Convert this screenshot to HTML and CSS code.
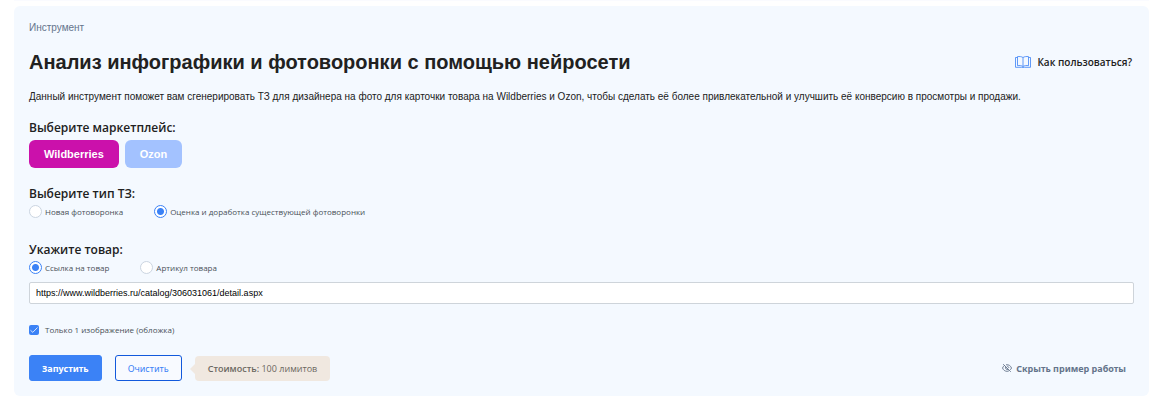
FILE: index.html
```html
<!DOCTYPE html>
<html lang="ru">
<head>
    <meta charset="UTF-8">
    <meta name="viewport" content="width=device-width, initial-scale=1.0">
    <title>Анализ инфографики и фотоворонки</title>
    <link rel="stylesheet" href="styles.css">
</head>
<body>
    <main class="card">
        <div class="category">Инструмент</div>
        <div class="header">
            <h1 class="title">Анализ инфографики и фотоворонки с помощью нейросети</h1>
            <a class="help" href="#">
                <svg width="16" height="12" viewBox="0 0 16 12" fill="none" stroke="#3b82f6" stroke-width=".8">
                    <path d="M8 1.500C6.500 .5 4.500 .4 2.500 .6V9.700C4.500 9.300 6.500 9.500 8 10.500C9.500 9.500 11.500 9.300 13.500 9.700V.6C11.500 .4 9.500 .5 8 1.500Z"/>
                    <path d="M8 1.500V10.500M2.500 1.500H.5V11.300H6.500L8 11.500L9.500 11.300H15.500V1.500H13.500"/>
                </svg>
                Как пользоваться?
            </a>
        </div>
        <p class="description">Данный инструмент поможет вам сгенерировать ТЗ для дизайнера на фото для карточки товара на Wildberries и Ozon, чтобы сделать её более привлекательной и улучшить её конверсию в просмотры и продажи.</p>

        <form class="form">
            <h2 class="label">Выберите маркетплейс:</h2>
            <div class="markets">
                <button class="market wildberries" type="button">Wildberries</button>
                <button class="market ozon" type="button">Ozon</button>
            </div>

            <h2 class="label">Выберите тип ТЗ:</h2>
            <div class="options">
                <label class="option"><input class="radio" type="radio" name="type">Новая фотоворонка</label>
                <label class="option"><input class="radio" type="radio" name="type" checked>Оценка и доработка существующей фотоворонки</label>
            </div>

            <h2 class="label">Укажите товар:</h2>
            <div class="options product">
                <label class="option"><input class="radio" type="radio" name="product" checked>Ссылка на товар</label>
                <label class="option"><input class="radio" type="radio" name="product">Артикул товара</label>
            </div>
            <input class="url" type="text" aria-label="Ссылка на товар" value="https://www.wildberries.ru/catalog/306031061/detail.aspx">

            <label class="option cover">
                <span class="check">
                    <input class="checkbox" type="checkbox" checked>
                    <svg class="tick" width="10" height="10" viewBox="0 0 10 10" fill="none" stroke="#fff" stroke-width=".8">
                        <path d="M1.500 5.300L3.800 7.300L8.500 2.500"/>
                    </svg>
                </span>
                Только 1 изображение (обложка)
            </label>

            <div class="actions">
                <button class="button run" type="button">Запустить</button>
                <button class="button clear" type="button">Очистить</button>
                <div class="cost"><span class="cost-name">Стоимость:</span> 100 лимитов</div>
                <button class="toggle" type="button">
                    <svg width="10" height="10" viewBox="0 0 10 10" fill="none" stroke="#64748b" stroke-width=".9">
                        <path d="M3 2.100C1.700 2.800 .9 3.900 .5 5C1.300 7.100 3 8.300 5 8.300C5.700 8.300 6.400 8.100 7 7.800M4 1.800C6.500 1.300 8.700 2.700 9.500 5C9.200 5.800 8.800 6.400 8.200 6.900M1.200 1.200L8.800 8.800M3.700 3.800C2.800 5.200 4.500 7.200 6.200 6.300M5 3.200C6 3.200 6.800 4 6.800 5"/>
                    </svg>
                    Скрыть пример работы
                </button>
            </div>
        </form>
    </main>
</body>
</html>
```
FILE: styles.css
```css
* {
    box-sizing: border-box;
}

html {
    background-color: #fff;
}

body {
    margin: 0 25px 8px 14px;
    padding-top: 5px;
    border-top: 1px solid #fafbff;
    color: #212121;
    font-family: "Open Sans", "Noto Sans", sans-serif;
}

.card {
    padding: 15px;
    border-radius: 6px;
    background-color: #f4f9ff;
}

.category {
    color: #64748b;
    font: 10px/14px "Liberation Sans", Arial, sans-serif;
}

.header {
    display: flex;
    justify-content: space-between;
    align-items: center;
    margin-top: 13px;
}

.title {
    margin: 0;
    font: bold 20px/28px "Liberation Sans", Arial, sans-serif;
}

.help {
    display: flex;
    align-items: center;
    gap: 6px;
    padding: 0 2px;
    color: #212121;
    font-size: 10px;
    font-weight: 600;
    line-height: 14px;
    text-decoration: none;
}

.description {
    margin: 14px 0 15px;
    font: 10px/14px "Liberation Sans", Arial, sans-serif;
}

.label {
    margin: 0;
    font-size: 12px;
    font-weight: 600;
    line-height: 18px;
}

.markets {
    display: flex;
    gap: 6px;
    margin: 3px 0 17px;
}

.market {
    height: 28px;
    padding: 0 15px;
    border: none;
    border-radius: 6px;
    color: #fff;
    font: bold 11px/26px "Liberation Sans", Arial, sans-serif;
    cursor: pointer;
}

.wildberries {
    background-color: #cb11ab;
}

.ozon {
    background-color: #a3c2ff;
}

.options {
    display: flex;
    gap: 31px;
    margin: 2px 0 23px;
}

.product {
    margin-bottom: 8px;
}

.option {
    display: flex;
    align-items: center;
    gap: 3px;
    color: #495057;
    font-size: 8px;
    line-height: 13px;
}

.radio {
    appearance: none;
    width: 13px;
    height: 13px;
    margin: 0;
    border: 1px solid #cbd5e1;
    border-radius: 50%;
    background-color: #fff;
}

.radio:checked {
    border-color: #3b82f6;
    background-image: radial-gradient(circle, #3b82f6 3px, transparent 4px);
}

.url {
    display: block;
    width: 100%;
    height: 22px;
    padding: 0 6px;
    border: 1px solid #ced4da;
    border-radius: 2px;
    background-color: #fff;
    color: #000;
    font: 9px "Liberation Sans", Arial, sans-serif;
}

.cover {
    gap: 6px;
    margin: 19px 0 19px;
}

.check {
    display: grid;
}

.checkbox,
.tick {
    grid-area: 1 / 1;
}

.checkbox {
    appearance: none;
    width: 10px;
    height: 10px;
    margin: 0;
    border-radius: 2px;
    background-color: #3b82f6;
}

.tick {
    pointer-events: none;
}

.actions {
    display: flex;
    align-items: center;
    gap: 13px;
}

.button {
    height: 26px;
    padding: 0 12px;
    border: 1px solid #3b82f6;
    border-radius: 3px;
    font: 9px "Noto Sans", "Open Sans", sans-serif;
    cursor: pointer;
}

.run {
    background-color: #3b82f6;
    color: #fff;
    font-weight: bold;
}

.clear {
    border-color: #1259dc;
    background-color: #f8faff;
    color: #3b82f6;
}

.cost {
    position: relative;
    padding: 0 13px;
    border-radius: 4px;
    background-color: #f0e8e0;
    color: #6b675f;
    font-size: 9px;
    line-height: 25px;
}

.cost::before {
    content: "";
    position: absolute;
    top: 8px;
    left: -5px;
    border: 5px solid transparent;
    border-left: none;
    border-right-color: #f0e8e0;
}

.cost-name {
    font-weight: 600;
}

.toggle {
    display: flex;
    align-items: center;
    gap: 4px;
    margin-left: auto;
    padding: 0 8px;
    border: none;
    background: none;
    color: #64748b;
    font: bold 9px "Noto Sans", "Open Sans", sans-serif;
    cursor: pointer;
}
```
